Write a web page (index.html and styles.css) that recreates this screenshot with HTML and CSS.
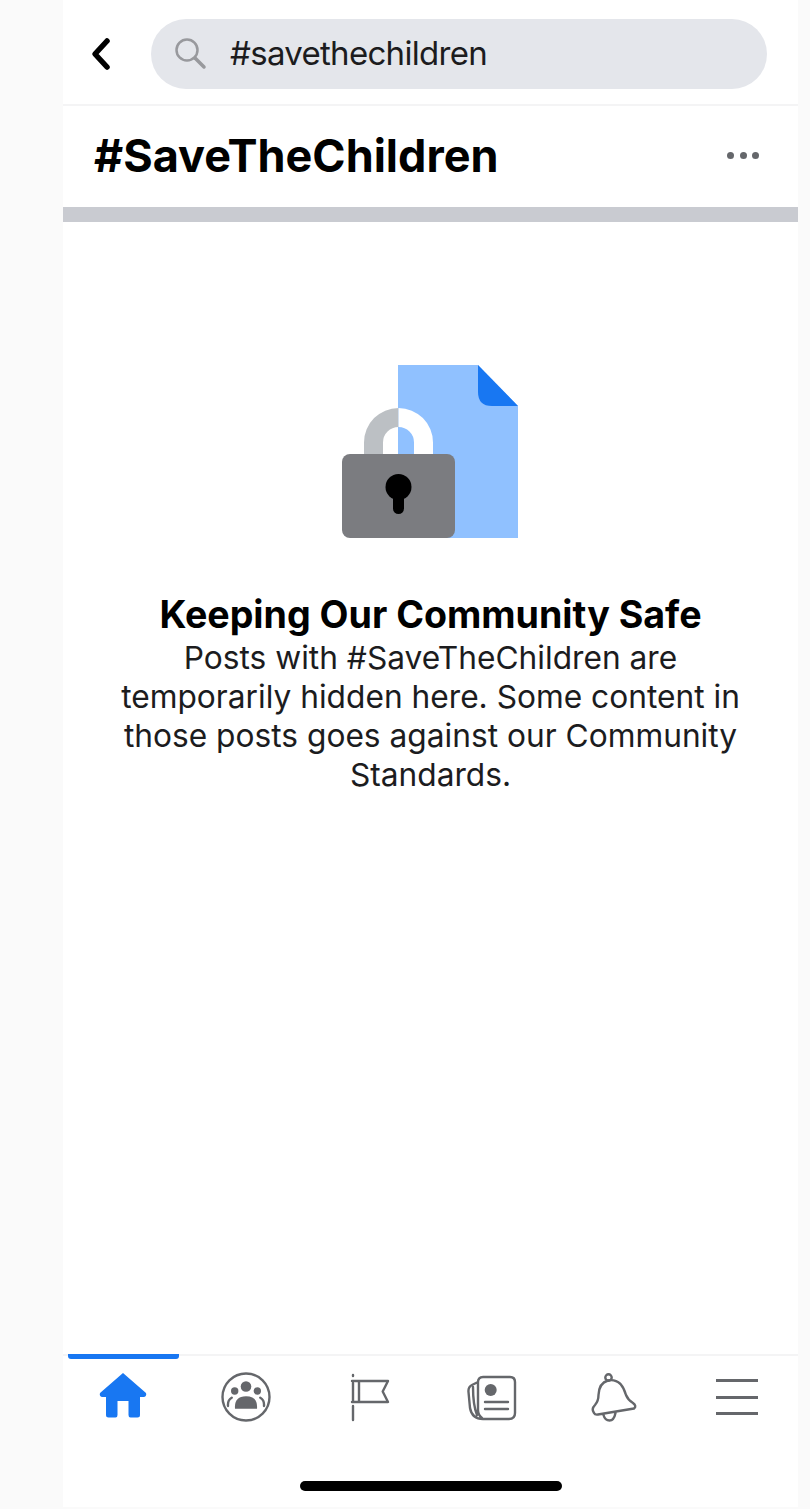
FILE: index.html
```html
<!DOCTYPE html>
<html lang="en">

<head>
    <meta charset="UTF-8">
    <meta name="viewport" content="width=device-width, initial-scale=1.0">
    <title>#SaveTheChildren</title>
    <link rel="stylesheet" href="styles.css">
</head>

<body>
    <div class="phone">
        <div class="searchbar">
            <svg class="back" width="26" height="34" viewBox="0 0 26 34">
                <path d="M19 4 L7 17 L19 30" />
            </svg>
            <div class="searchbox">
                <svg class="lens" width="36" height="36" viewBox="0 0 36 36">
                    <circle cx="13" cy="14" r="10.500" />
                    <path d="M21 22 L30 31" />
                </svg>
                <span class="query">#savethechildren</span>
            </div>
        </div>

        <div class="titlebar">
            <h1>#SaveTheChildren</h1>
            <div class="dots"><i></i><i></i><i></i></div>
        </div>
        <div class="divider"></div>

        <div class="notice">
            <svg class="art" width="180" height="176" viewBox="0 0 180 176">
                <path fill="#90c1ff" d="M58 2 H138 L178 43 V175 H58 Z" />
                <path fill="#1877f2" d="M138 2 L178 43 H152 Q138 43 138 29 Z" />
                <path fill="#bcc0c4" d="M24 95 V79.500 A34.500 34.500 0 0 1 58.500 45 V64 A15.500 15.500 0 0 0 43 79.500 V95 Z" />
                <path fill="#ffffff" d="M93 95 V79.500 A34.500 34.500 0 0 0 58.500 45 V64 A15.500 15.500 0 0 1 74 79.500 V95 Z" />
                <rect fill="#7b7c80" x="2" y="91" width="113" height="84" rx="8" />
                <circle fill="#000000" cx="58.500" cy="124" r="13" />
                <rect fill="#000000" x="53" y="124" width="11" height="27" rx="5.500" />
            </svg>
            <h2>Keeping Our Community Safe</h2>
            <p>Posts with #SaveTheChildren are temporarily hidden here. Some content in those posts goes against our Community Standards.</p>
        </div>

        <div class="tabbar">
            <div class="tab active">
                <svg width="50" height="50" viewBox="1 3 50 50">
                    <path fill="#1877f2" d="M25 3 L48 23 Q49 26 46 27 H42 V45 Q42 47.500 39.500 47.500 H32.500 Q30.500 47.500 30.500 45 V31 H19.500 V45 Q19.500 47.500 17.500 47.500 H10.500 Q8 47.500 8 45 V27 H4 Q1 26 2 23 Z" />
                </svg>
            </div>
            <div class="tab">
                <svg width="52" height="52" viewBox="1 2 52 52">
                    <circle class="line" cx="26" cy="26" r="23.500" />
                    <circle class="solid" cx="26" cy="15.500" r="5.300" />
                    <circle class="solid" cx="14.700" cy="20" r="3.700" />
                    <circle class="solid" cx="37.300" cy="20" r="3.700" />
                    <path class="solid" d="M15 37.700 Q14 25.300 26 25.300 Q38 25.300 37 37.700 Z" />
                    <path class="line thin" d="M8 35 Q7.500 29 11.700 26.700 M44 35 Q44.500 29 40.300 26.700" />
                </svg>
            </div>
            <div class="tab">
                <svg width="40" height="50" viewBox="0 0 40 50">
                    <path class="line" d="M4 2 V3 M4 10 V29 M4 33 V47 M3 8 H39 L33.700 18.500 L39 29 H3 M10 8 V29" />
                </svg>
            </div>
            <div class="tab">
                <svg width="50" height="50" viewBox="0 -2 50 50">
                    <path class="line" d="M11 7 Q11 2 16 2 H43 Q48 2 48 7 V38 Q48 44 42 44 H16 Q5 44 3 33 L1.500 17 Q1 12 5 10 L11 7 V35 Q11 40 15 43 M6 12 Q6 30 10 40" />
                    <circle class="solid" cx="23.700" cy="15" r="6" />
                    <path class="line" d="M18 27 H41 M18 34 H41" />
                </svg>
            </div>
            <div class="tab">
                <svg width="46" height="50" viewBox="0 0 46 50">
                    <path class="line" d="M3 40 Q0 36 4 32 Q7.500 28 7.500 22 Q8 10 17 7.500 Q24 6 29.500 11 Q33 15 35 22 Q37 27 42 30 Q46 33 43 35.500 L7 41.500 Q4 42 3 40 Z M12.500 42 Q14 47.500 18.500 47.500 Q23 47.500 24.500 40" />
                    <circle class="line" cx="17.500" cy="4.500" r="3.200" />
                </svg>
            </div>
            <div class="tab">
                <div class="burger"><i></i><i></i><i></i></div>
            </div>
        </div>

        <div class="homebar"></div>
    </div>
</body>

</html>
```

FILE: styles.css
```css
* {
    margin: 0;
    padding: 0;
    box-sizing: border-box;
}

body {
    height: 1509px;
    overflow: hidden;
    background: #fafafa;
    font-family: 'Inter', 'Liberation Sans', sans-serif;
    color: #1c1c1e;
}

.phone {
    display: flex;
    flex-direction: column;
    width: 735px;
    height: 1507px;
    margin-left: 63px;
    background: #fff;
}

.searchbar {
    display: flex;
    align-items: center;
    height: 106px;
    padding: 4px 31px 0 25px;
    border-bottom: 2px solid #f4f4f5;
}

.back path {
    fill: none;
    stroke: #000;
    stroke-width: 5.500;
    stroke-linecap: round;
    stroke-linejoin: round;
}

.searchbox {
    display: flex;
    align-items: center;
    flex: 1;
    height: 70px;
    margin-left: 37px;
    padding-left: 23px;
    border-radius: 35px;
    background: #e4e6eb;
}

.lens circle,
.lens path {
    fill: none;
    stroke: #98999d;
    stroke-linecap: round;
}

.lens circle {
    stroke-width: 2.500;
}

.lens path {
    stroke-width: 3.500;
}

.query {
    margin-left: 20px;
    padding-bottom: 2px;
    font-size: 33px;
    letter-spacing: -0.7px;
}

.titlebar {
    display: flex;
    align-items: center;
    justify-content: space-between;
    height: 101px;
    padding: 0 39px 3px 31px;
}

h1 {
    font-size: 45px;
    font-weight: 700;
    color: #000;
}

.dots {
    display: flex;
    gap: 5.500px;
}

.dots i {
    width: 7px;
    height: 7px;
    border-radius: 50%;
    background: #65676b;
}

.divider {
    height: 15px;
    background: #c9cbd1;
}

.notice {
    display: flex;
    flex-direction: column;
    align-items: center;
    flex: 1;
    padding: 141px 47px 0;
    text-align: center;
}

.art {
    display: block;
    margin-right: 2px;
}

h2 {
    margin-top: 52px;
    font-size: 37.600px;
    line-height: 47px;
    font-weight: 700;
    color: #000;
}

p {
    font-size: 31.700px;
    line-height: 39px;
}

.tabbar {
    display: flex;
    height: 127px;
    border-top: 2px solid #f4f4f5;
}

.tab {
    position: relative;
    display: flex;
    justify-content: center;
    align-items: flex-start;
    flex: 1;
    padding-top: 17px;
}

.tab svg {
    overflow: visible;
}

.tab.active::before {
    content: "";
    position: absolute;
    top: -2px;
    left: 5px;
    width: 111px;
    height: 5px;
    border-radius: 0 0 3px 3px;
    background: #1877f2;
}

.line {
    fill: none;
    stroke: #65676b;
    stroke-width: 2.400;
    stroke-linecap: round;
    stroke-linejoin: round;
}

.line.thin {
    stroke-width: 2.400;
}

.solid {
    fill: #65676b;
}

.burger {
    display: flex;
    flex-direction: column;
    gap: 13.500px;
    width: 42px;
    margin-top: 6px;
}

.burger i {
    display: block;
    height: 3px;
    background: #65676b;
}

.homebar {
    flex: none;
    width: 262px;
    height: 10px;
    margin: 0 auto 16px;
    border-radius: 5px;
    background: #000;
}
```
